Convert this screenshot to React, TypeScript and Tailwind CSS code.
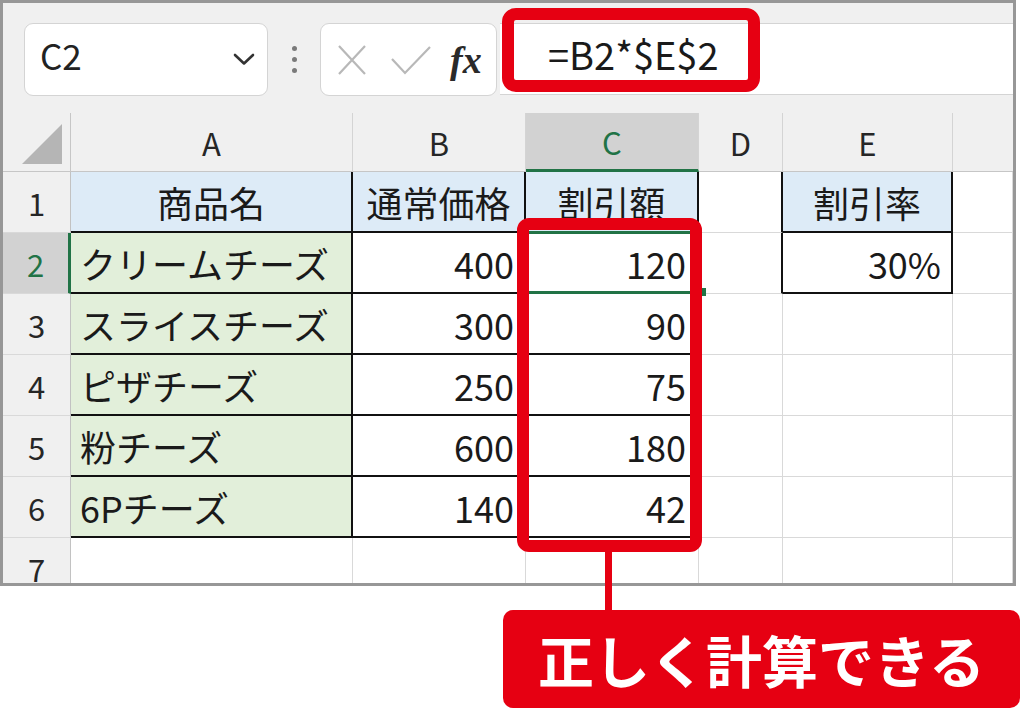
import React from 'react'

const items = [
  { name: 'クリームチーズ', price: 400, discount: 120 },
  { name: 'スライスチーズ', price: 300, discount: 90 },
  { name: 'ピザチーズ', price: 250, discount: 75 },
  { name: '粉チーズ', price: 600, discount: 180 },
  { name: '6Pチーズ', price: 140, discount: 42 },
]

const colHeader =
  'flex items-center justify-center border-r border-b border-r-[#d4d4d4] border-b-[#c6c6c6] bg-[#f0f0f0] text-[31px] leading-none text-[#262626]'
const rowHeader =
  'flex items-center justify-center border-r border-b border-r-[#c2c2c2] border-b-[#d9d9d9] bg-[#f0f0f0] text-[31px] leading-none text-[#262626]'
const plain = 'border-r border-b border-[#d9d9d9] bg-white'

function NameBox() {
  return (
    <div className="flex h-[73px] w-[244px] items-center justify-between rounded-[9px] border border-[#d4d4d4] bg-white pl-[15px] pr-[12px]">
      <span className="pb-[10px] text-[35px] leading-none text-[#222]">C2</span>
      <svg width="22" height="13" viewBox="0 0 22 13" fill="none">
        <path d="M2 2 L11 10.5 L20 2" stroke="#333" strokeWidth="2.6" strokeLinecap="round" strokeLinejoin="round" />
      </svg>
    </div>
  )
}

function FxBox() {
  return (
    <div className="flex h-[73px] w-[177px] items-center rounded-[9px] border border-[#d4d4d4] bg-white pl-[16px]">
      <svg width="30" height="32" viewBox="0 0 30 32" fill="none">
        <path d="M2 2 L28 30 M28 2 L2 30" stroke="#b8b8b8" strokeWidth="2.2" />
      </svg>
      <svg className="ml-[24px]" width="40" height="30" viewBox="0 0 40 30" fill="none">
        <path d="M1 14 L14 28 L39 2" stroke="#b8b8b8" strokeWidth="2.2" />
      </svg>
      <span className="ml-[19px] font-['Liberation_Serif',serif] text-[38px] font-semibold italic leading-none text-[#2a2a2a]">
        fx
      </span>
    </div>
  )
}

export default function App() {
  return (
    <div className="relative h-[716px] w-[1024px] overflow-hidden bg-white font-['Noto_Sans_CJK_JP',sans-serif] text-[#1a1a1a]">
      <div className="h-[586px] w-[1016px] overflow-hidden border-[3px] border-[#979797] bg-[#f0f0f0]">
        {/* formula bar */}
        <div className="flex h-[110px] items-start pl-[21px] pt-[20px]">
          <NameBox />
          <div className="flex h-[73px] w-[52px] flex-col items-center justify-center gap-[6px]">
            <span className="h-[5px] w-[5px] rounded-full bg-[#7a7a7a]" />
            <span className="h-[5px] w-[5px] rounded-full bg-[#7a7a7a]" />
            <span className="h-[5px] w-[5px] rounded-full bg-[#7a7a7a]" />
          </div>
          <FxBox />
          <div className="ml-[3px] flex h-[72px] flex-1 items-center border-y border-[#d4d4d4] bg-white pb-[10px] pl-[48px] text-[38px] leading-none text-[#1a1a1a]">
            =B2*$E$2
          </div>
        </div>

        {/* sheet */}
        <div className="grid grid-cols-[68px_282px_173px_173px_84px_170px_60px] grid-rows-[59px_repeat(7,61px)]">
          <div className="flex items-end justify-end border-r border-b border-[#c6c6c6] bg-[#f0f0f0] pb-[7px] pr-[8px]">
            <svg width="40" height="40" viewBox="0 0 40 40">
              <path d="M0 40 L40 40 L40 0 Z" fill="#b5b5b5" />
            </svg>
          </div>
          <div className={colHeader}>A</div>
          <div className={colHeader}>B</div>
          <div className="flex items-center justify-center border-r border-r-[#d4d4d4] border-b-[3px] border-b-[#217346] bg-[#d2d2d2] text-[31px] leading-none text-[#217346]">
            C
          </div>
          <div className={colHeader}>D</div>
          <div className={colHeader}>E</div>
          <div className="border-b border-b-[#c6c6c6] bg-[#f0f0f0]" />

          {/* row 1 */}
          <div className={rowHeader}>1</div>
          <div className="flex items-center justify-center border-r-2 border-b-2 border-[#111] bg-[#ddebf7] text-[36px] leading-none">商品名</div>
          <div className="flex items-center justify-center border-r-2 border-b-2 border-[#111] bg-[#ddebf7] text-[36px] leading-none">通常価格</div>
          <div className="flex items-center justify-center border-r-2 border-b-2 border-[#111] bg-[#ddebf7] text-[36px] leading-none">割引額</div>
          <div className="border-r-2 border-b border-r-[#111] border-b-[#d9d9d9] bg-white" />
          <div className="flex items-center justify-center border-r-2 border-b-2 border-[#111] bg-[#ddebf7] text-[36px] leading-none">割引率</div>
          <div className={plain} />

          {items.map((item, i) => (
            <React.Fragment key={item.name}>
              {i === 0 ? (
                <div className="flex items-center justify-center border-r-[3px] border-b border-r-[#217346] border-b-[#d9d9d9] bg-[#d2d2d2] text-[31px] leading-none text-[#217346]">
                  2
                </div>
              ) : (
                <div className={rowHeader}>{i + 2}</div>
              )}
              <div className="flex items-center border-r-2 border-b-2 border-[#111] bg-[#e2efda] pl-[9px] text-[36px] leading-none">
                {item.name}
              </div>
              <div className="flex items-center justify-end border-r-2 border-b-2 border-[#111] bg-white pr-[10px] text-[36px] leading-none">
                {item.price}
              </div>
              <div className="relative flex items-center justify-end border-r-2 border-b-2 border-[#111] bg-white pr-[11px] text-[36px] leading-none">
                {item.discount}
                {i === 0 && (
                  <>
                    <span className="pointer-events-none absolute -top-[2px] -right-[2px] -bottom-[2px] -left-[2px] border-[3px] border-[#217346]" />
                    <span className="absolute -right-[9px] -bottom-[4px] h-[8px] w-[7px] bg-[#217346]" />
                  </>
                )}
              </div>
              {i === 0 ? (
                <>
                  <div className="border-r-2 border-b border-r-[#111] border-b-[#d9d9d9] bg-white" />
                  <div className="flex items-center justify-end border-r-2 border-b-2 border-[#111] bg-white pr-[10px] text-[36px] leading-none">
                    30%
                  </div>
                </>
              ) : (
                <>
                  <div className={plain} />
                  <div className={plain} />
                </>
              )}
              <div className={plain} />
            </React.Fragment>
          ))}

          {/* row 7 */}
          <div className={rowHeader}>7</div>
          <div className={plain} />
          <div className={plain} />
          <div className={plain} />
          <div className={plain} />
          <div className={plain} />
          <div className={plain} />
        </div>
      </div>

      {/* annotations */}
      <div className="absolute left-[502px] top-[8px] h-[84px] w-[258px] rounded-[14px] border-[12px] border-[#e60012]" />
      <div className="absolute left-[517px] top-[218px] h-[334px] w-[185px] rounded-[12px] border-[12px] border-[#e60012]" />
      <div className="absolute left-[605px] top-[548px] h-[64px] w-[7px] bg-[#e60012]" />

      <div className="ml-[503px] mt-[24px] flex h-[98px] w-[517px] items-center justify-center rounded-[10px] bg-[#e60012] text-[56px] font-bold leading-none text-white">
        正しく計算できる
      </div>
    </div>
  )
}
